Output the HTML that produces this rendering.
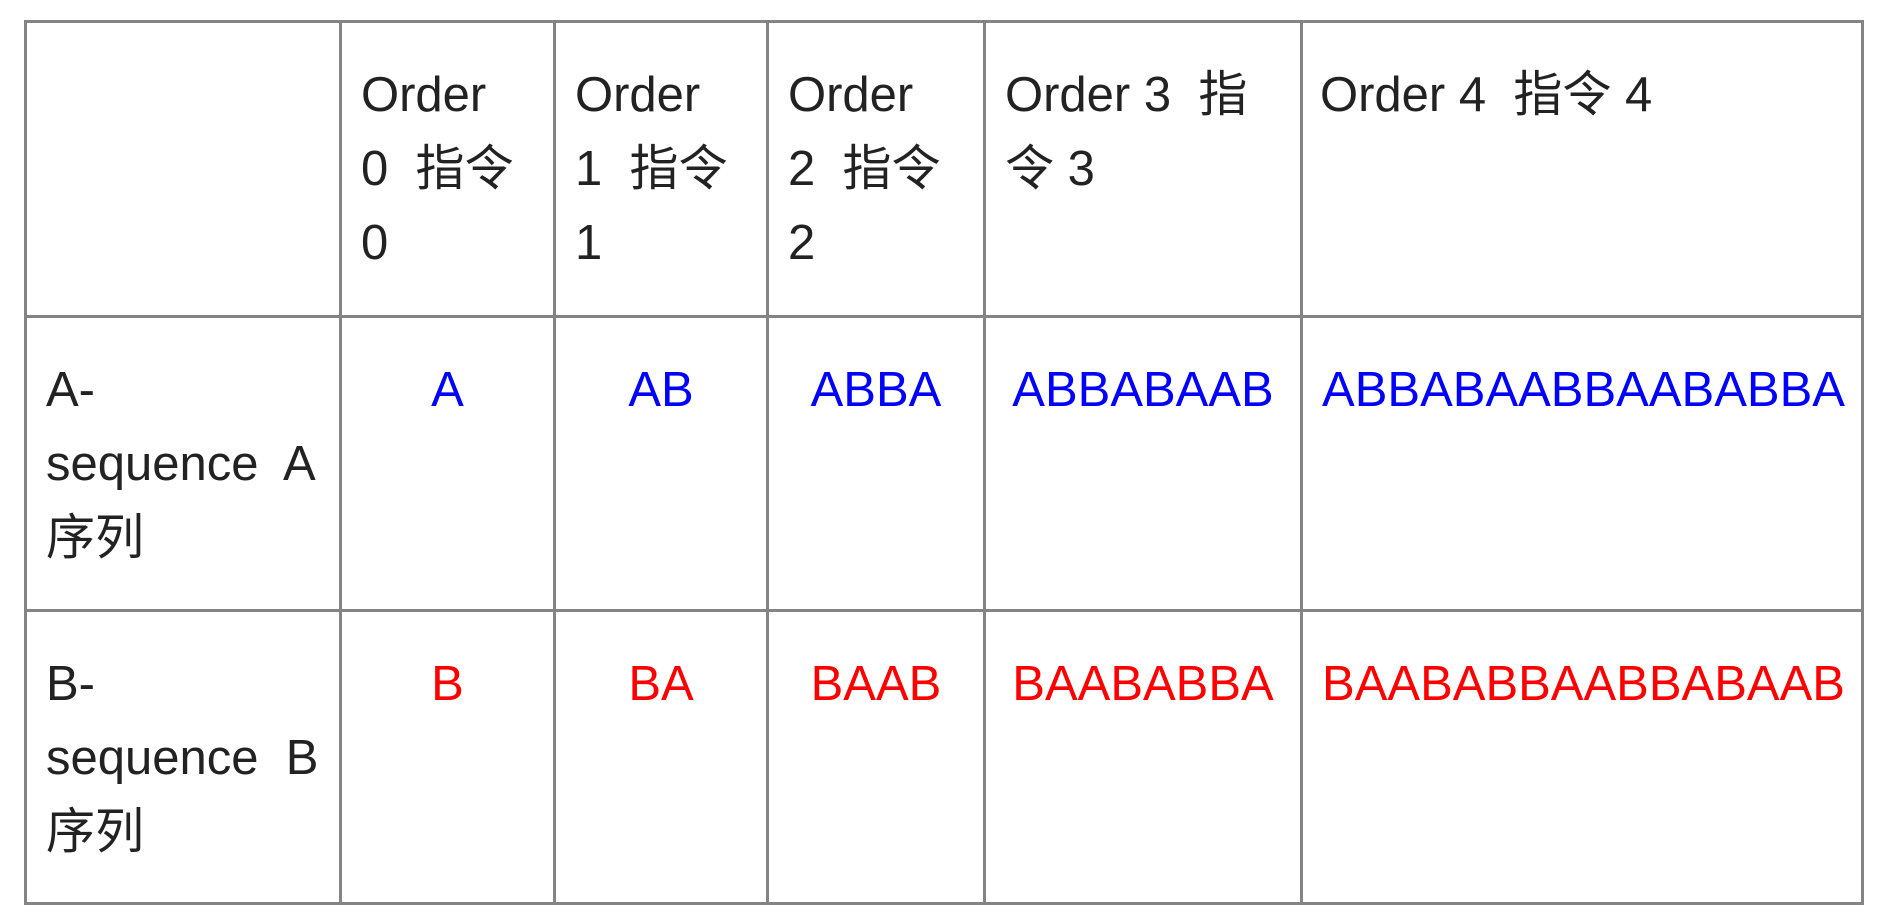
<!DOCTYPE html>
<html><head><meta charset="utf-8"><style>
html,body{margin:0;padding:0;background:#fff;width:1886px;height:922px;overflow:hidden}
table{position:absolute;left:24px;top:20px;border-collapse:collapse;table-layout:fixed;width:1837px;
font-family:"Liberation Sans","Noto Sans CJK SC",sans-serif;font-size:49px;line-height:74px;color:#222}
td{border:3px solid #848484;padding:35px 19px 0 19px;vertical-align:top;white-space:nowrap;overflow:visible}
tr.h1{height:295px} tr.h2{height:294px} tr.h3{height:293px}
.c{text-align:center}
.b{color:#0000ff}.r{color:#ff0000}
td.last{padding-left:17px;padding-right:14px}
</style></head><body>
<table>
<colgroup><col style="width:315px"><col style="width:214px"><col style="width:213px"><col style="width:217px"><col style="width:317px"><col style="width:561px"></colgroup>
<tr class="h1"><td></td><td>Order<br>0&nbsp; 指令<br>0</td><td>Order<br>1&nbsp; 指令<br>1</td><td>Order<br>2&nbsp; 指令<br>2</td><td>Order 3&nbsp; 指<br>令 3</td><td class="last">Order 4&nbsp; 指令 4</td></tr>
<tr class="h2"><td>A-<br>sequence&nbsp; A<br>序列</td><td class="c b">A</td><td class="c b">AB</td><td class="c b">ABBA</td><td class="c b">ABBABAAB</td><td class="c b last">ABBABAABBAABABBA</td></tr>
<tr class="h3"><td>B-<br>sequence&nbsp; B<br>序列</td><td class="c r">B</td><td class="c r">BA</td><td class="c r">BAAB</td><td class="c r">BAABABBA</td><td class="c r last">BAABABBAABBABAAB</td></tr>
</table>
</body></html>
